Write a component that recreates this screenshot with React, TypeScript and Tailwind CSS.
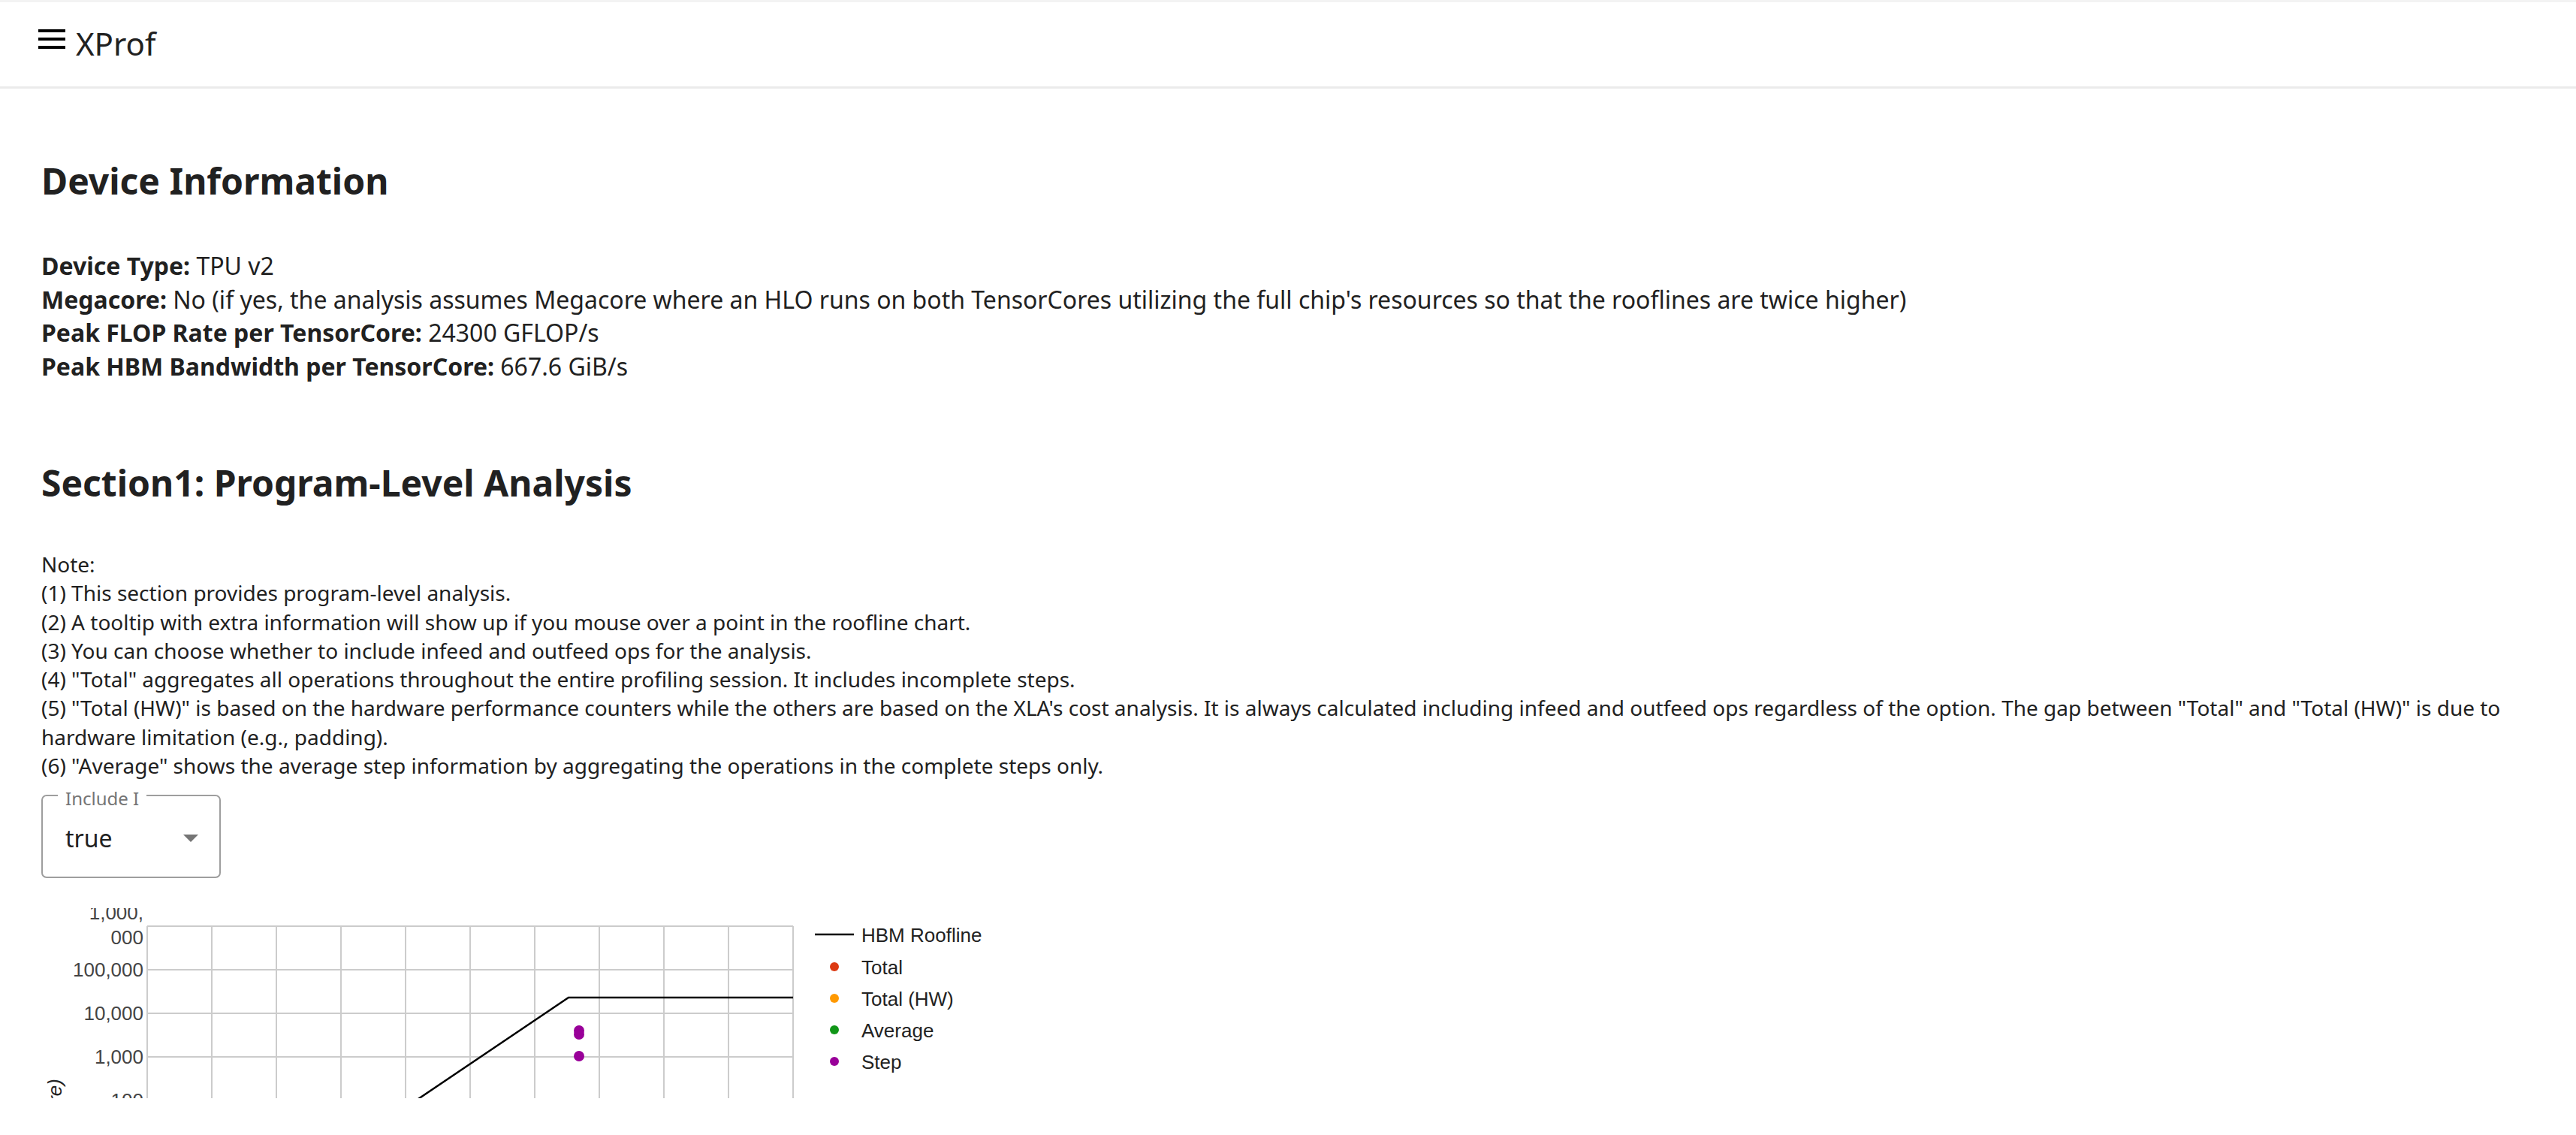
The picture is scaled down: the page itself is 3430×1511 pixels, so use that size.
import React from 'react';

const notes = [
  'Note:',
  '(1) This section provides program-level analysis.',
  '(2) A tooltip with extra information will show up if you mouse over a point in the roofline chart.',
  '(3) You can choose whether to include infeed and outfeed ops for the analysis.',
  '(4) "Total" aggregates all operations throughout the entire profiling session. It includes incomplete steps.',
  '(5) "Total (HW)" is based on the hardware performance counters while the others are based on the XLA\'s cost analysis. It is always calculated including infeed and outfeed ops regardless of the option. The gap between "Total" and "Total (HW)" is due to hardware limitation (e.g., padding).',
  '(6) "Average" shows the average step information by aggregating the operations in the complete steps only.',
];

const legend = [
  { label: 'Total', color: '#dc3912' },
  { label: 'Total (HW)', color: '#ff9900' },
  { label: 'Average', color: '#109618' },
  { label: 'Step', color: '#990099' },
];

const yLabels = [
  { y: 82, text: '100,000' },
  { y: 140, text: '10,000' },
  { y: 198, text: '1,000' },
  { y: 256, text: '100' },
  { y: 314, text: '10' },
];

const RooflineChart: React.FC = () => {
  const left = 141;
  const top = 24;
  const col = 86;
  const row = 58;
  const cols = Array.from({ length: 11 }, (_, i) => left + i * col);
  const rows = Array.from({ length: 7 }, (_, i) => top + i * row);

  return (
    <div className="h-[253px] overflow-hidden">
      <svg width="1500" height="420" className="block" style={{ fontFamily: '"Liberation Sans", Arial, sans-serif' }}>
        {rows.map((y) => (
          <line key={`r${y}`} x1={left} x2={left + 10 * col} y1={y} y2={y} stroke="#cccccc" strokeWidth="2" />
        ))}
        {cols.map((x) => (
          <line key={`c${x}`} x1={x} x2={x} y1={top} y2={top + 6 * row} stroke="#cccccc" strokeWidth="2" />
        ))}

        <text x="136" y="6" textAnchor="end" dominantBaseline="central" fontSize="26" fill="#444444">1,000,</text>
        <text x="136" y="39" textAnchor="end" dominantBaseline="central" fontSize="26" fill="#444444">000</text>
        {yLabels.map((l) => (
          <text key={l.text} x="136" y={l.y} textAnchor="end" dominantBaseline="central" fontSize="26" fill="#444444">
            {l.text}
          </text>
        ))}

        <text
          x="0"
          y="0"
          transform="translate(27 227) rotate(-90)"
          textAnchor="end"
          fontSize="26"
          fontStyle="italic"
          fill="#222222"
        >
          Performance (GFLOP/s per TensorCore)
        </text>

        <polyline
          points={`284,401 702,119 ${left + 10 * col},119`}
          fill="none"
          stroke="#000000"
          strokeWidth="2.5"
        />

        <circle cx="716" cy="163" r="7" fill="#990099" />
        <circle cx="716" cy="168" r="7" fill="#990099" />
        <circle cx="716" cy="197" r="7" fill="#990099" />

        <line x1="1030" x2="1082" y1="35" y2="35" stroke="#000000" strokeWidth="2.5" />
        <text x="1092" y="36" dominantBaseline="central" fontSize="26" fill="#222222">HBM Roofline</text>
        {legend.map((item, i) => (
          <g key={item.label}>
            <circle cx="1056" cy={78 + i * 42} r="6" fill={item.color} />
            <text x="1092" y={79 + i * 42} dominantBaseline="central" fontSize="26" fill="#222222">
              {item.label}
            </text>
          </g>
        ))}
      </svg>
    </div>
  );
};

const App: React.FC = () => {
  return (
    <div className="min-h-screen w-full bg-white text-[#212121]" style={{ fontFamily: '"Noto Sans", "Open Sans", sans-serif' }}>
      <header className="h-[118px] border-t-[3px] border-b-[3px] border-t-[#f3f3f3] border-b-[#ebebeb] flex items-center pl-[51px]">
        <svg width="36" height="26" viewBox="0 0 36 26" className="mb-[14px]">
          <rect x="0" y="0" width="36" height="4" fill="#000" />
          <rect x="0" y="11" width="36" height="4" fill="#000" />
          <rect x="0" y="22" width="36" height="4" fill="#000" />
        </svg>
        <span className="ml-[14px] text-[42px] leading-[56px] mb-[2px]">XProf</span>
      </header>

      <main className="px-[55px]">
        <h2 className="mt-[90px] text-[48px] leading-[65px] font-bold">Device Information</h2>

        <div className="mt-[59px] text-[32px] leading-[44.5px]">
          <div>
            <span className="font-bold">Device Type:</span> TPU v2
          </div>
          <div>
            <span className="font-bold">Megacore:</span> No (if yes, the analysis assumes Megacore where an HLO runs on both TensorCores utilizing the full chip's resources so that the rooflines are twice higher)
          </div>
          <div>
            <span className="font-bold">Peak FLOP Rate per TensorCore:</span> 24300 GFLOP/s
          </div>
          <div>
            <span className="font-bold">Peak HBM Bandwidth per TensorCore:</span> 667.6 GiB/s
          </div>
        </div>

        <h2 className="mt-[100px] text-[48px] leading-[65px] font-bold">Section1: Program-Level Analysis</h2>

        <div className="mt-[57px] text-[28px] leading-[38.3px]">
          {notes.map((n) => (
            <div key={n}>{n}</div>
          ))}
        </div>

        <div className="relative mt-[20px] w-[239px] h-[111px] rounded-[7px] border-2 border-[#9e9e9e]">
          <span className="absolute left-[20px] top-[-14px] bg-white px-[10px] text-[24px] leading-[34px] text-[#757575]">
            Include I
          </span>
          <div className="flex items-center h-full pl-[30px] pr-[28px] pt-[4px]">
            <span className="flex-1 text-[32px] leading-[44px]">true</span>
            <svg width="20" height="10" viewBox="0 0 20 10">
              <polygon points="0,0 20,0 10,10" fill="#757575" />
            </svg>
          </div>
        </div>

        <div className="mt-[40px]">
          <RooflineChart />
        </div>
      </main>
    </div>
  );
};

export default App;
